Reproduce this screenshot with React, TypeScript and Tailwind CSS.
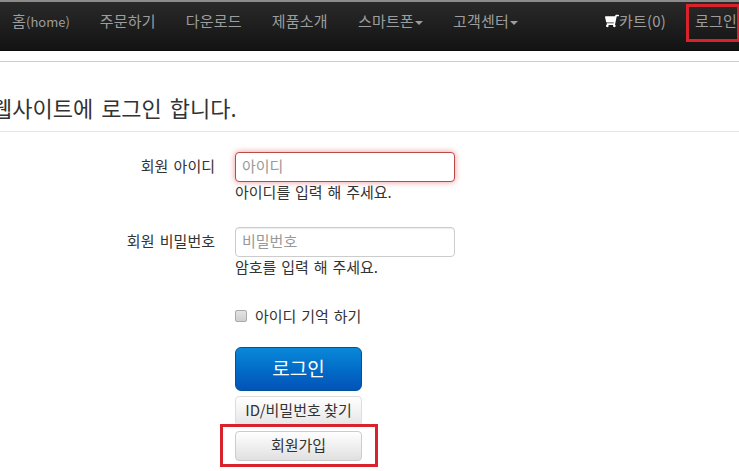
import React from "react";
import { FaShoppingCart } from "react-icons/fa";

const font = { fontFamily: '"Noto Sans CJK KR", "Liberation Sans", sans-serif' };

function Caret() {
  return <span className="ml-[1px] inline-block border-x-[4px] border-t-[4px] border-x-transparent border-t-[#9d9d9d] align-middle" />;
}

const links = [
  { label: "주문하기" },
  { label: "다운로드" },
  { label: "제품소개" },
  { label: "스마트폰", caret: true },
  { label: "고객센터", caret: true },
];

function Navbar() {
  return (
    <div className="flex h-[51px] w-[739px] border-t-2 border-b border-t-[#8c8c8c] border-b-[#0a0a0a] bg-gradient-to-b from-[#2a2a2a] to-[#131313] text-[15px] leading-[20px] tracking-[0.2px] text-[#9d9d9d]">
      <div className="flex pl-[12px]">
        <a className="mr-[30px] whitespace-nowrap pt-[9px]">
          홈<span className="text-[13px] tracking-normal">(home)</span>
        </a>
        {links.map((l) => (
          <a key={l.label} className="mr-[30px] whitespace-nowrap pt-[9px]">
            {l.label}
            {l.caret && <Caret />}
          </a>
        ))}
      </div>
      <div className="ml-auto flex">
        <a className="mr-[29px] flex h-fit items-start whitespace-nowrap pt-[9px]">
          <FaShoppingCart className="mt-[3px] h-[14px] w-[14px] -scale-x-100 text-white" />
          카트(0)
        </a>
        <a className="relative mr-[2px] whitespace-nowrap pt-[9px]">로그인</a>
      </div>
    </div>
  );
}

function Field(props: { label: string; placeholder: string; help: string; error?: boolean; className: string }) {
  return (
    <div className={"flex " + props.className}>
      <label className="w-[215px] pt-[4px] text-right text-[15px] leading-[20px] [word-spacing:2px] text-[#333]">{props.label}</label>
      <div className="ml-[20px] w-[220px]">
        <input
          placeholder={props.placeholder}
          className={
            "block h-[30px] w-full rounded-[4px] border bg-white px-[6px] pb-[3px] text-[15px] outline-none placeholder:text-[#999] " +
            (props.error
              ? "border-[#b94a48] shadow-[0_0_6px_rgba(224,80,80,0.6)]"
              : "border-[#ccc] shadow-[inset_0_1px_1px_rgba(0,0,0,0.075)]")
          }
        />
        <p className="text-[15px] leading-[20px] [word-spacing:1.5px] whitespace-nowrap text-[#333]">{props.help}</p>
      </div>
    </div>
  );
}

export default function App() {
  return (
    <div className="relative h-[471px] w-[739px] overflow-hidden bg-white" style={font}>
      <Navbar />
      <hr className="mt-[10px] border-t border-[#ccc]" />
      <div className="border-b border-[#e5e5e5] pb-[4px]">
        <h1 className="mt-[25px] ml-[-8px] text-[22px] leading-[40px] font-normal [word-spacing:3px] whitespace-nowrap text-[#333]">
          웹사이트에 로그인 합니다.
        </h1>
      </div>
      <Field className="mt-[20px]" label="회원 아이디" placeholder="아이디" help="아이디를 입력 해 주세요." error />
      <Field className="mt-[25px]" label="회원 비밀번호" placeholder="비밀번호" help="암호를 입력 해 주세요." />
      <div className="mt-[29px] ml-[235px] flex items-center gap-[8px] text-[15px] leading-[20px] [word-spacing:1.5px] text-[#333]">
        <input type="checkbox" className="h-[12px] w-[12px] appearance-none rounded-[2px] border border-[#aaa] bg-gradient-to-b from-[#e4e4e4] to-[#cfcfcf]" />
        <span>아이디 기억 하기</span>
      </div>
      <div className="mt-[21px] ml-[235px] flex w-[127px] flex-col">
        <button className="h-[44px] rounded-[6px] border border-[#04519b] bg-gradient-to-b from-[#0a88d8] to-[#0452b8] pb-[2px] text-[19px] text-white">
          로그인
        </button>
        <button className="mt-[5px] h-[30px] rounded-[4px] border border-[#ddd] bg-gradient-to-b from-white to-[#e6e6e6] pb-[2px] text-[15px] whitespace-nowrap text-[#333]">
          ID/비밀번호 찾기
        </button>
        <button className="mt-[5px] h-[30px] rounded-[4px] border border-[#ccc] bg-gradient-to-b from-white to-[#e0e0e0] pb-[2px] text-[15px] text-[#333]">
          회원가입
        </button>
      </div>
      <div className="absolute top-[4px] left-[686px] h-[38px] w-[53px] border-[3px] border-r-[2px] border-[#d8222c]" />
      <div className="absolute top-[424px] left-[220px] h-[43px] w-[158px] border-[3px] border-[#d8222c]" />
    </div>
  );
}
